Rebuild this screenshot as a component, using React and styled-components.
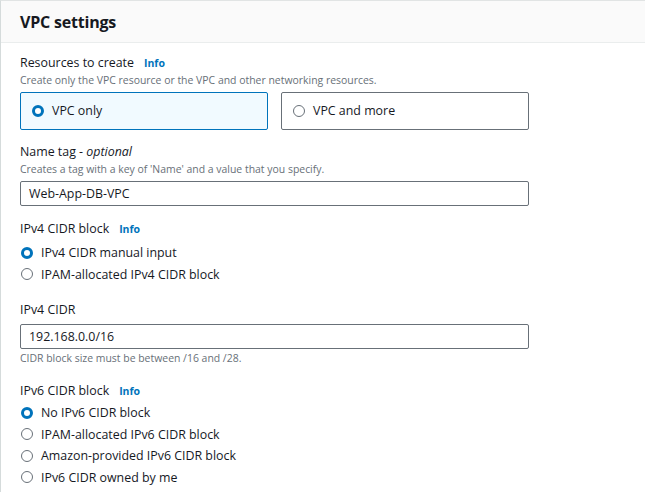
import React from 'react'
import styled, {createGlobalStyle} from 'styled-components'

const Global = createGlobalStyle`
  body {
    margin: 0;
    background: #ffffff;
    font-family: "Open Sans", "Noto Sans", Arial, sans-serif;
    color: #16191f;
  }
`;

const Panel = styled.div`
  width: 645px;
  height: 492px;
  border-left: 1px solid #d5dbdb;
  border-top: 1px solid #e1e4e4;
  box-sizing: border-box;
  overflow: hidden;
`;

const Header = styled.div`
  height: 42px;
  background: #fafafa;
  border-bottom: 1px solid #eaeded;
  display: flex;
  align-items: center;
  padding-left: 19px;
  box-sizing: border-box;
`;

const Title = styled.h2`
  margin: 0;
  font-size: 16px;
  font-weight: 700;
  letter-spacing: -0.2px;
  color: #16191f;
`;

const Body = styled.div`
  padding: 11px 19px 0 19px;
  display: flex;
  flex-direction: column;
`;

const Field = styled.div`
  display: flex;
  flex-direction: column;
  margin-bottom: ${p => p.gap || 16}px;
`;

const Label = styled.div`
  font-size: 12.4px;
  line-height: 18px;
  color: #16191f;
  display: flex;
  align-items: center;
  gap: 10px;
  em {
    font-style: italic;
  }
`;

const Info = styled.span`
  color: #0073bb;
  font-size: 10.5px;
  font-weight: 700;
`;

const Desc = styled.div`
  font-size: 10.45px;
  line-height: 16px;
  color: #687078;
  margin-top: ${p => p.top || 0}px;
`;

const Tiles = styled.div`
  display: grid;
  grid-template-columns: 248px 248px;
  gap: 13px;
  margin-top: 4px;
`;

const Tile = styled.div`
  height: 38px;
  box-sizing: border-box;
  border: 1px solid ${p => (p.active ? '#0073bb' : '#687078')};
  background: ${p => (p.active ? '#f1faff' : '#ffffff')};
  border-radius: 2px;
  display: flex;
  align-items: center;
  padding-left: 11px;
  padding-bottom: 1px;
  gap: 8px;
  font-size: 12.4px;
`;

const Radio = styled.span`
  width: 12px;
  height: 12px;
  box-sizing: border-box;
  border-radius: 50%;
  flex-shrink: 0;
  border: ${p => (p.checked ? '3.5px solid #0073bb' : '1px solid #687078')};
  background: #fff;
`;

const Input = styled.div`
  width: 509px;
  height: 25px;
  box-sizing: border-box;
  border: 1px solid #687078;
  border-radius: 2px;
  margin-top: ${p => p.top || 4}px;
  display: flex;
  align-items: center;
  padding-left: 8px;
  font-size: 12.4px;
  color: #16191f;
`;

const Options = styled.div`
  display: flex;
  flex-direction: column;
  margin-top: ${p => p.top || 4}px;
`;

const Option = styled.div`
  height: 21.5px;
  display: flex;
  align-items: center;
  gap: 8px;
  font-size: 12.4px;
  padding-left: 1px;
`;

const RadioGroup = ({items, top}) => (
  <Options top={top}>
    {items.map((it, i) => (
      <Option key={i}>
        <Radio checked={i === 0} />
        {it}
      </Option>
    ))}
  </Options>
)

export default function App() {
  return (
    <>
      <Global />
      <Panel>
        <Header>
          <Title>VPC settings</Title>
        </Header>
        <Body>
          <Field gap={13}>
            <Label>Resources to create <Info>Info</Info></Label>
            <Desc>Create only the VPC resource or the VPC and other networking resources.</Desc>
            <Tiles>
              <Tile active><Radio checked />VPC only</Tile>
              <Tile><Radio />VPC and more</Tile>
            </Tiles>
          </Field>
          <Field gap={14}>
            <Label><span>Name tag - <em>optional</em></span></Label>
            <Desc>Creates a tag with a key of 'Name' and a value that you specify.</Desc>
            <Input>Web-App-DB-VPC</Input>
          </Field>
          <Field gap={16}>
            <Label>IPv4 CIDR block <Info>Info</Info></Label>
            <RadioGroup items={['IPv4 CIDR manual input', 'IPAM-allocated IPv4 CIDR block']} />
          </Field>
          <Field gap={16}>
            <Label>IPv4 CIDR</Label>
            <Input top={5}>192.168.0.0/16</Input>
            <Desc top={1}>CIDR block size must be between /16 and /28.</Desc>
          </Field>
          <Field>
            <Label>IPv6 CIDR block <Info>Info</Info></Label>
            <RadioGroup top={2} items={['No IPv6 CIDR block', 'IPAM-allocated IPv6 CIDR block', 'Amazon-provided IPv6 CIDR block', 'IPv6 CIDR owned by me']} />
          </Field>
        </Body>
      </Panel>
    </>
  )
}
